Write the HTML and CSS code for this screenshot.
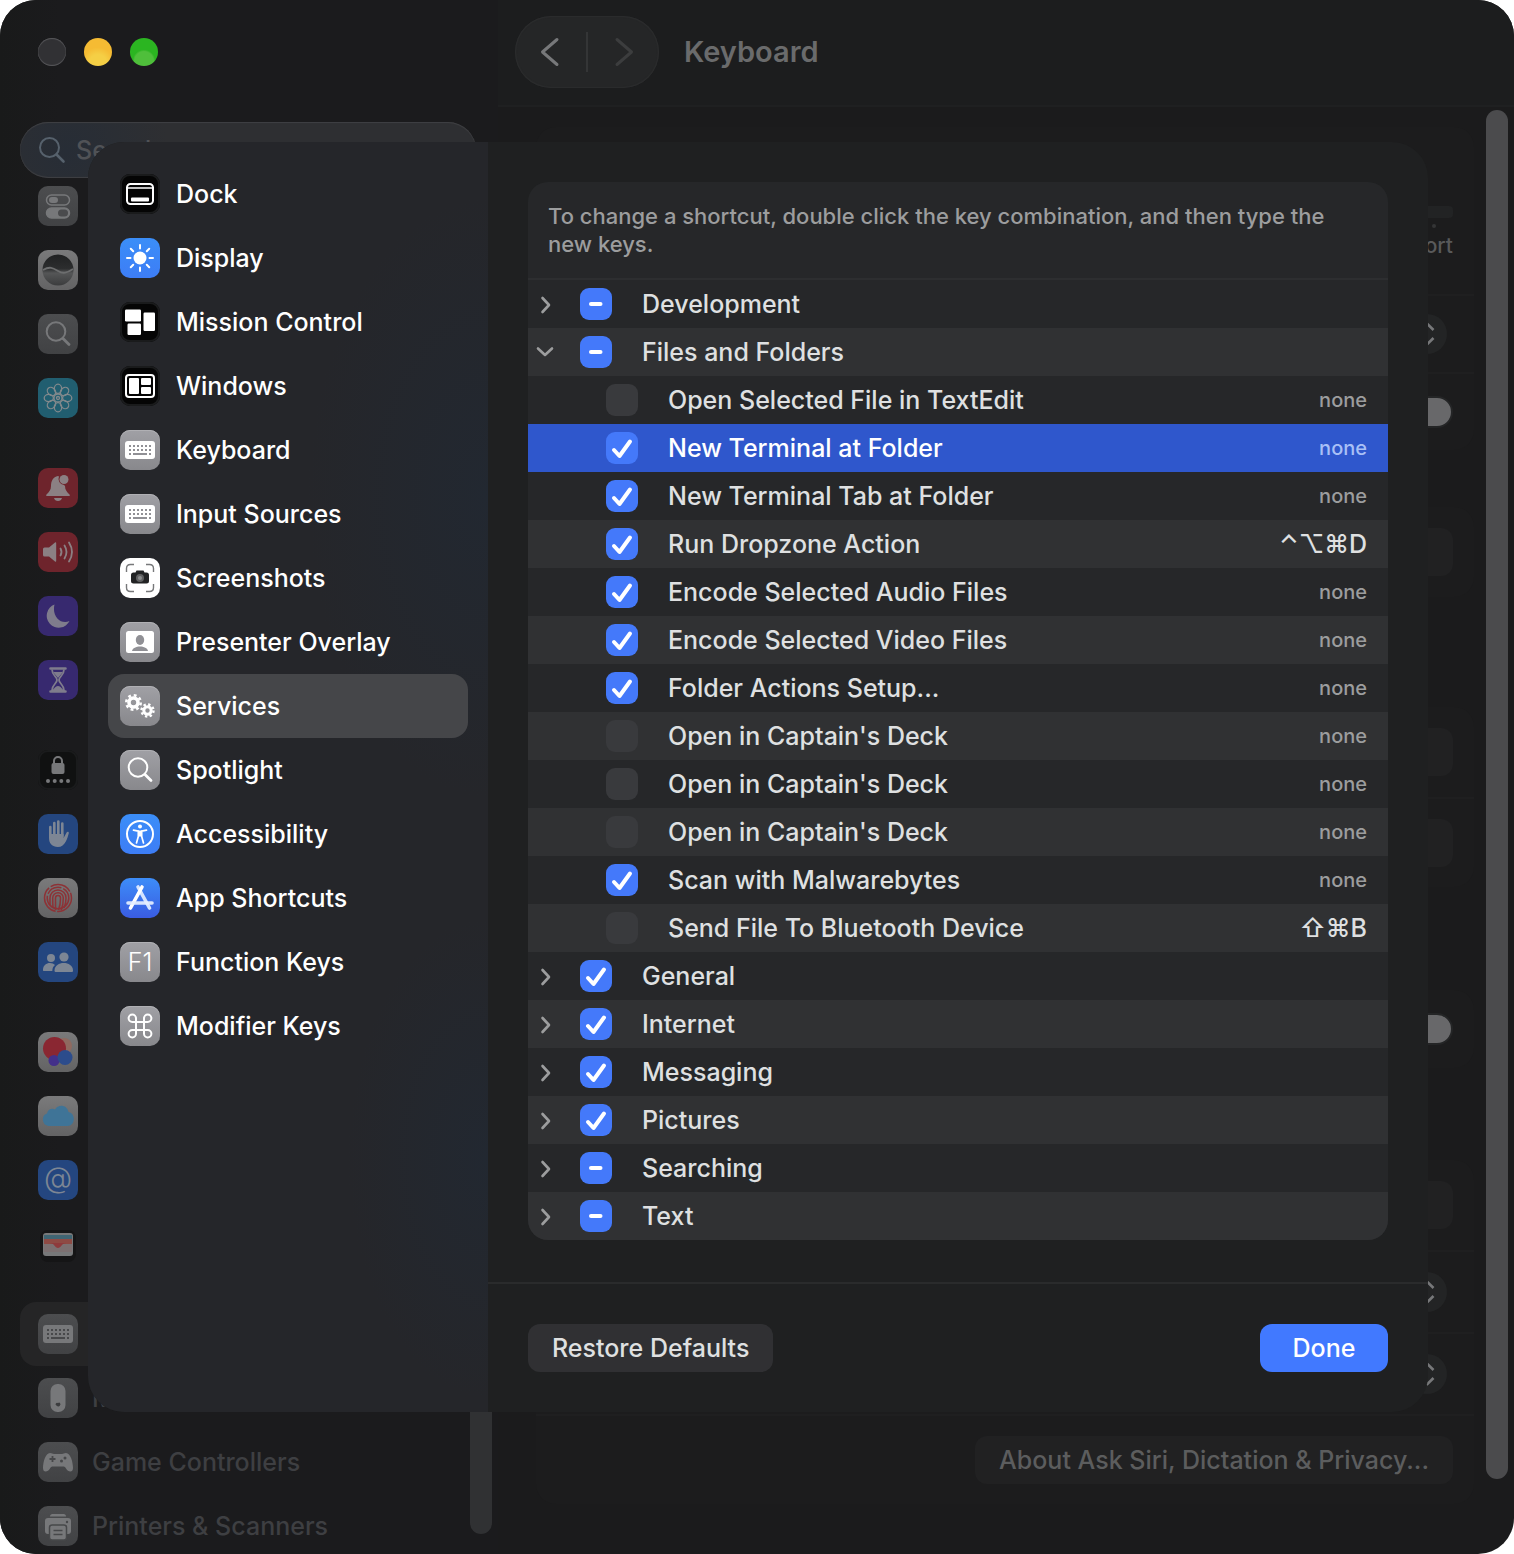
FILE: index.html
```html
<!DOCTYPE html>
<html lang="en">
<head>
<meta charset="utf-8">
<meta name="viewport" content="width=device-width, initial-scale=1">
<title>Keyboard</title>
<link rel="stylesheet" href="styles.css">
</head>
<body>
<svg class="defs" aria-hidden="true">
  <defs>
    <symbol id="i-search" viewBox="0 0 40 40"><g fill="none" stroke="currentColor" stroke-linecap="round"><circle cx="18" cy="17.500" r="9.300" stroke-width="2"/><path d="M25 24.500l6 6" stroke-width="2.800"/></g></symbol>
    <symbol id="i-keyboard" viewBox="0 0 40 40"><rect x="5" y="11" width="30" height="18" rx="3" fill="currentColor"/><g stroke="var(--tile)" stroke-width="2" fill="none"><path d="M9 16h22M9 20h22" stroke-dasharray="2 2"/><path d="M9 24h2M13 24h14M29 24h2"/></g></symbol>
    <symbol id="i-chevron" viewBox="0 0 16 20"><path d="M4.500 4l6.500 7-6.500 7" fill="none" stroke="currentColor" stroke-width="2.600" stroke-linecap="round" stroke-linejoin="round"/></symbol>
    <symbol id="i-updown" viewBox="0 0 40 40"><path d="M14.500 16l6-6 6 6M14.500 24l6 6 6-6" fill="none" stroke="currentColor" stroke-width="2.600"/></symbol>
  </defs>
</svg>

<div class="window">
  <aside class="sidebar">
    <div class="lights">
      <button class="light" type="button" aria-label="Close"></button>
      <button class="light light--yellow" type="button" aria-label="Minimize"></button>
      <button class="light light--green" type="button" aria-label="Zoom"></button>
    </div>
    <label class="search">
      <svg class="search__icon" viewBox="0 0 28 28"><g fill="none" stroke="currentColor" stroke-width="2" stroke-linecap="round"><circle cx="11.500" cy="11.500" r="9.500"/><path d="M18.500 18.500l7 7" stroke-width="2.600"/></g></svg>
      <input class="search__input" type="text" placeholder="Search">
    </label>

    <div class="nav">
      <div class="nav__group">
        <a class="nav__row" href="#"><span class="tile tile--dim"><svg viewBox="0 0 40 40"><g stroke="currentColor" stroke-width="1.500"><rect x="8.500" y="9" width="23" height="10" rx="5" fill="none"/><rect x="8.500" y="22" width="23" height="10" rx="5" fill="currentColor"/></g><rect x="11" y="11" width="9" height="6" rx="3" fill="currentColor"/><rect x="20" y="23.500" width="10" height="7" rx="3.500" fill="#4a4b4d"/></svg></span></a>
        <a class="nav__row" href="#"><span class="tile tile--pale"><svg viewBox="0 0 40 40"><defs><linearGradient id="orb" x1="0" y1="0" x2="0" y2="1"><stop offset="0" stop-color="#202122"/><stop offset=".45" stop-color="#2c2d2e"/><stop offset=".6" stop-color="#555657"/><stop offset="1" stop-color="#3b3c3d"/></linearGradient></defs><circle cx="20" cy="20" r="15.500" fill="url(#orb)"/><path d="M5 20c7-4 10-2 15 1s9 2 15-2" fill="none" stroke="#6d6e6f" stroke-width="1.800"/></svg></span></a>
        <a class="nav__row" href="#"><span class="tile tile--dim"><svg><use href="#i-search"/></svg></span></a>
        <a class="nav__row" href="#"><span class="tile tile--teal"><svg viewBox="0 0 40 40"><g fill="none" stroke="currentColor" stroke-width="1.300"><ellipse cx="20" cy="10.800" rx="3.700" ry="4.600"/><ellipse cx="20" cy="10.800" rx="3.700" ry="4.600" transform="rotate(45 20 20)"/><ellipse cx="20" cy="10.800" rx="3.700" ry="4.600" transform="rotate(90 20 20)"/><ellipse cx="20" cy="10.800" rx="3.700" ry="4.600" transform="rotate(135 20 20)"/><ellipse cx="20" cy="10.800" rx="3.700" ry="4.600" transform="rotate(180 20 20)"/><ellipse cx="20" cy="10.800" rx="3.700" ry="4.600" transform="rotate(225 20 20)"/><ellipse cx="20" cy="10.800" rx="3.700" ry="4.600" transform="rotate(270 20 20)"/><ellipse cx="20" cy="10.800" rx="3.700" ry="4.600" transform="rotate(315 20 20)"/><circle cx="20" cy="20" r="4"/><circle cx="20" cy="20" r="1.500"/></g></svg></span></a>
      </div>
      <div class="nav__group">
        <a class="nav__row" href="#"><span class="tile tile--red"><svg viewBox="0 0 40 40"><path d="M20 8c-5 1-7 5-7 10 0 4-2 6-4.500 8.500-.6.800-.3 1.500.5 1.500h22c.8 0 1.100-.7.500-1.500C29 24 27 22 27 18l-1-1a6 6 0 0 1-5-8.500zM16 30h8c-.5 2-2 3-4 3s-3.500-1-4-3z" fill="currentColor"/><circle cx="26" cy="11.500" r="4.500" fill="currentColor"/></svg></span></a>
        <a class="nav__row" href="#"><span class="tile tile--red"><svg viewBox="0 0 40 40"><path d="M5 17q0-1.500 1.500-1.500H11L17 10.500q1.200-.8 1.200.8v17.400q0 1.600-1.200.8L11 24.500H6.500Q5 24.500 5 23z" fill="currentColor"/><g fill="none" stroke="currentColor" stroke-width="1.800" stroke-linecap="round"><path d="M22.500 16.500q2 3.500 0 7M26.500 13.500q4 6.500 0 13M31 10.500q6 9.500 0 19"/></g></svg></span></a>
        <a class="nav__row" href="#"><span class="tile tile--violet"><svg viewBox="0 0 40 40"><path d="M16.500 8.500a12 12 0 1 0 15 16.500c-8 4-18-4-15-16.500z" fill="currentColor"/></svg></span></a>
        <a class="nav__row" href="#"><span class="tile tile--violet"><svg viewBox="0 0 40 40"><path d="M12.500 8.500h15M12.500 31.500h15" stroke="currentColor" stroke-width="2.600" stroke-linecap="round"/><path d="M14 9.500c0 6 5 7 5 10.500s-5 4.500-5 10.500h12c0-6-5-7-5-10.500s5-4.500 5-10.500" fill="none" stroke="currentColor" stroke-width="1.800"/><path d="M15 12h10l-5 6zM15 30q5-8 10 0z" fill="currentColor"/></svg></span></a>
      </div>
      <div class="nav__group">
        <a class="nav__row" href="#"><span class="tile tile--black tile--faded"><svg viewBox="0 0 40 40"><rect x="13.500" y="13" width="13" height="11" rx="2" fill="currentColor"/><path d="M16 14v-3a4 4 0 0 1 8 0v3" fill="none" stroke="currentColor" stroke-width="2"/><g fill="currentColor"><circle cx="10" cy="31" r="2"/><circle cx="16.700" cy="31" r="2"/><circle cx="23.300" cy="31" r="2"/><circle cx="30" cy="31" r="2"/></g></svg></span></a>
        <a class="nav__row" href="#"><span class="tile tile--navy"><svg viewBox="0 0 40 40"><g stroke="currentColor" stroke-width="2.600" stroke-linecap="round" fill="none"><path d="M12.300 13v10M16.300 9v13M20.300 7.500V22M24.300 9.500V22"/></g><path d="M11 20h14.600v4l3-5.500c.8-1.500 2.600-.8 2.200.7-1.300 4.300-3.300 13.800-11 13.800-5.500 0-8.800-3.500-8.800-9z" fill="currentColor"/></svg></span></a>
        <a class="nav__row" href="#"><span class="tile tile--pale"><svg viewBox="0 0 40 40"><g fill="none" stroke="#8d3236" stroke-width="1.500"><circle cx="20" cy="20" r="13.500" stroke-dasharray="22 1.500 30 2"/><circle cx="20" cy="20" r="10.800" stroke-dasharray="36 2 16 2"/><path d="M12 27V20a8 8 0 0 1 16 0q0 6-2 10M15 30q-.3-5-.3-10a5.300 5.300 0 0 1 10.600 0q0 7-2 12M17.500 32V20a2.500 2.500 0 0 1 5 0q0 7-2 12"/></g></svg></span></a>
        <a class="nav__row" href="#"><span class="tile tile--navy"><svg viewBox="0 0 40 40"><g fill="currentColor"><circle cx="13" cy="16" r="4"/><path d="M5 28c0-8 9-8.500 12-5-2 1.500-2.500 3-2.700 6H6.500C5.300 29 5 29 5 28z"/><circle cx="26" cy="15" r="4.600"/><path d="M16.500 28.500c0-10 18.500-10 18.500 0 0 1-.5 1.500-1.500 1.500H18c-1 0-1.500-.5-1.500-1.500z"/></g></svg></span></a>
      </div>
      <div class="nav__group">
        <a class="nav__row" href="#"><span class="tile tile--pale"><svg viewBox="0 0 40 40"><circle cx="26" cy="14" r="8" fill="#8f6a60"/><circle cx="16.500" cy="16.500" r="11.500" fill="#8a2732"/><circle cx="16" cy="28.500" r="5.500" fill="#43308a"/><circle cx="27" cy="25.500" r="7.500" fill="#2c4c8c"/></svg></span></a>
        <a class="nav__row" href="#"><span class="tile tile--pale"><svg viewBox="0 0 40 40"><path d="M10.500 30a6.500 6.500 0 0 1-1.500-12.500c.5-4 5-6 8-4 3-5.500 12-5 13.500 2.500 7.500 1.500 7 14-1 14z" fill="#3f7497"/></svg></span></a>
        <a class="nav__row" href="#"><span class="tile tile--navy tile--glyph tile--at">@</span></a>
        <a class="nav__row" href="#"><span class="tile tile--none"><svg viewBox="0 0 40 40"><rect x="2" y="6" width="36" height="32" rx="8" fill="#151516"/><rect x="5" y="9" width="30" height="23" rx="3" fill="#777879"/><path d="M6 11h28v4H6z" fill="#3f6472"/><path d="M6 15h28v5H6z" fill="#8e4a44"/><path d="M6 20h8c2 0 3 4 6 4s4-4 6-4h8v8H6z" fill="#7c7071"/><path d="M12 19c4 0 5 5 8 5s4-5 8-5z" fill="#8e3a3c"/></svg></span></a>
      </div>
      <div class="nav__group">
        <a class="nav__row nav__row--current" href="#"><span class="tile tile--dim"><svg><use href="#i-keyboard"/></svg></span></a>
        <a class="nav__row" href="#"><span class="tile tile--dim"><svg viewBox="0 0 40 40"><rect x="12.500" y="6" width="15" height="28" rx="7" fill="currentColor"/><path d="M20 25q2-1.500 2.500 1.500Q21.500 29 20 28.500T17.500 26.500Q18 24 20 25z" fill="#3c3d3f"/></svg></span>Mouse</a>
        <a class="nav__row" href="#"><span class="tile tile--dim"><svg viewBox="0 0 40 40"><path d="M12 11c2 0 2.500 1 4 1h8c1.500 0 2-1 4-1 4.500 0 7 9 7 15 0 5-5 4-7 .5-.8-1.500-1.500-2-3-2H15c-1.500 0-2.200.5-3 2-2 3.500-7 4.500-7-.5 0-6 2.500-15 7-15z" fill="currentColor"/><path d="M14.500 14v6M11.500 17h6" stroke="#47484a" stroke-width="1.800"/><circle cx="27" cy="16" r="1.500" fill="#47484a"/><circle cx="23.500" cy="19" r="1.500" fill="#47484a"/></svg></span>Game Controllers</a>
        <a class="nav__row" href="#"><span class="tile tile--dim"><svg viewBox="0 0 40 40"><path d="M12 10.500q0-2.500 2.500-2.500h11q2.500 0 2.500 2.500z" fill="currentColor"/><rect x="7" y="12" width="26" height="16" rx="3" fill="currentColor"/><rect x="11.500" y="19" width="17" height="15" rx="2.500" fill="currentColor" stroke="#47484a" stroke-width="1.500"/><path d="M15.500 24.500h9M15.500 28.500h9" stroke="#47484a" stroke-width="1.600"/><circle cx="29" cy="16" r="1.200" fill="#47484a"/></svg></span>Printers &amp; Scanners</a>
      </div>
    </div>
    <div class="thumb thumb--sidebar"></div>
  </aside>

  <main class="pane">
    <header class="toolbar">
      <div class="history">
        <button class="history__button" type="button" aria-label="Back"><svg viewBox="0 0 40 40"><path d="M26 7.500L11.500 20 26 32.500" fill="none" stroke="currentColor" stroke-width="3" stroke-linecap="round" stroke-linejoin="round"/></svg></button>
        <button class="history__button history__button--off" type="button" aria-label="Forward"><svg viewBox="0 0 40 40"><path d="M13 7.500L27.500 20 13 32.500" fill="none" stroke="currentColor" stroke-width="3" stroke-linecap="round" stroke-linejoin="round"/></svg></button>
      </div>
      <h1 class="toolbar__title">Keyboard</h1>
    </header>
    <div class="settings">
      <section class="group">
        <div class="setting setting--slider"><div class="slider"><span class="slider__track"></span><span class="slider__tick"></span><span class="slider__label">Short</span></div></div>
        <div class="setting"><span class="popup"><svg><use href="#i-updown"/></svg></span></div>
        <div class="setting"><span class="toggle"></span></div>
      </section>
      <section class="group group--b"><div class="setting setting--button"><span class="ghost"></span></div></section>
      <section class="group group--c">
        <div class="setting setting--button"><span class="ghost"></span></div>
        <div class="setting setting--button"><span class="ghost"></span></div>
      </section>
      <section class="group group--d"><div class="setting"><span class="toggle"></span></div></section>
      <section class="group group--e">
        <div class="setting setting--button"><span class="ghost"></span></div>
        <div class="setting setting--popup"><span class="popup"><svg><use href="#i-updown"/></svg></span></div>
        <div class="setting setting--popup"><span class="popup"><svg><use href="#i-updown"/></svg></span></div>
        <div class="setting setting--button"><button class="ghost ghost--text" type="button">About Ask Siri, Dictation &amp; Privacy...</button></div>
      </section>
    </div>
    <div class="thumb thumb--pane"></div>
  </main>

  <div class="sheet" role="dialog" aria-modal="true">
    <nav class="sections">
      <a class="section" href="#"><span class="tile tile--black"><svg viewBox="0 0 40 40"><rect x="7" y="10" width="26" height="20" rx="3.500" fill="none" stroke="currentColor" stroke-width="2"/><path d="M7 14h26" stroke="currentColor" stroke-width="1.600"/><rect x="11" y="23.500" width="18" height="4" rx="1" fill="currentColor"/></svg></span>Dock</a>
      <a class="section" href="#"><span class="tile tile--blue"><svg viewBox="0 0 40 40"><circle cx="20" cy="20" r="6.500" fill="currentColor"/><path d="M20 7v3.500M20 29.500V33M7 20h3.500M29.500 20H33M10.800 10.800l2.400 2.400M26.800 26.800l2.400 2.400M10.800 29.200l2.400-2.400M26.800 13.200l2.400-2.400" stroke="currentColor" stroke-width="2" stroke-linecap="round"/></svg></span>Display</a>
      <a class="section" href="#"><span class="tile tile--black"><svg viewBox="0 0 40 40"><g fill="currentColor"><rect x="5" y="7.500" width="16" height="12" rx="1.200"/><rect x="7.500" y="21.500" width="13.500" height="11.500" rx="1.200"/><rect x="23.500" y="10.500" width="11.500" height="18.500" rx="1.200"/></g></svg></span>Mission Control</a>
      <a class="section" href="#"><span class="tile tile--black"><svg viewBox="0 0 40 40"><rect x="6" y="9" width="28" height="22" rx="3" fill="none" stroke="currentColor" stroke-width="2"/><g fill="currentColor"><rect x="9" y="12" width="10" height="16" rx="1"/><rect x="21" y="12" width="10" height="7" rx="1"/><rect x="21" y="21" width="10" height="7" rx="1"/></g></svg></span>Windows</a>
      <a class="section" href="#"><span class="tile tile--gray"><svg><use href="#i-keyboard"/></svg></span>Keyboard</a>
      <a class="section" href="#"><span class="tile tile--gray"><svg><use href="#i-keyboard"/></svg></span>Input Sources</a>
      <a class="section" href="#"><span class="tile tile--white"><svg viewBox="0 0 40 40"><path d="M6.500 14v-3.500q0-4 4-4H14M26 6.500h3.500q4 0 4 4V14M33.500 26v3.500q0 4-4 4H26M14 33.500h-3.500q-4 0-4-4V26" fill="none" stroke="#77787a" stroke-width="1.400"/><path d="M11 17q0-2.500 2.500-2.500h2l1-2h7l1 2h2q2.500 0 2.500 2.500v6q0 2.500-2.500 2.500h-13Q11 25.500 11 23z" fill="#222324"/><circle cx="20" cy="20" r="4" fill="#606162"/><circle cx="20" cy="20" r="2" fill="#8b8c8d"/></svg></span>Screenshots</a>
      <a class="section" href="#"><span class="tile tile--gray"><svg viewBox="0 0 40 40"><rect x="6" y="9" width="28" height="22" rx="2.500" fill="currentColor"/><g fill="var(--tile)"><ellipse cx="20" cy="18" rx="4.200" ry="5"/><path d="M12 29c1-6 15-6 16 0z"/></g></svg></span>Presenter Overlay</a>
      <a class="section section--current" href="#" aria-current="page"><span class="tile tile--gray"><svg viewBox="0 0 40 40"><g fill="none" stroke="currentColor"><circle cx="13.500" cy="16.500" r="4.500" stroke-width="3.600"/><circle cx="13.500" cy="16.500" r="7.200" stroke-width="2.600" stroke-dasharray="2.830 2.830"/><circle cx="27.500" cy="24.500" r="3.700" stroke-width="3"/><circle cx="27.500" cy="24.500" r="6" stroke-width="2.400" stroke-dasharray="2.350 2.350"/></g></svg></span>Services</a>
      <a class="section" href="#"><span class="tile tile--gray"><svg><use href="#i-search"/></svg></span>Spotlight</a>
      <a class="section" href="#"><span class="tile tile--blue"><svg viewBox="0 0 40 40"><circle cx="20" cy="20" r="13" fill="none" stroke="currentColor" stroke-width="2"/><circle cx="20" cy="12.600" r="2" fill="currentColor"/><path d="M13.500 16.200l4.800 1v5.300l-1.800 6.500M26.500 16.200l-4.800 1v5.300l1.800 6.500" fill="none" stroke="currentColor" stroke-width="1.700" stroke-linecap="round" stroke-linejoin="round"/><path d="M18 16.400h4v6.200h-4z" fill="currentColor"/></svg></span>Accessibility</a>
      <a class="section" href="#"><span class="tile tile--store"><svg viewBox="0 0 40 40"><g stroke-linecap="round" stroke-width="3.600" fill="none"><path d="M18 9l11.500 21" stroke="#d5e4ff"/><path d="M22 9L10.500 30" stroke="#fff"/><path d="M8 25h24" stroke="#e6efff" stroke-opacity=".92"/></g></svg></span>App Shortcuts</a>
      <a class="section" href="#"><span class="tile tile--gray tile--glyph">F1</span>Function Keys</a>
      <a class="section" href="#"><span class="tile tile--gray"><svg viewBox="0 0 40 40"><path d="M16 16h8v8h-8zM16 16v-3.700A3.700 3.700 0 1 0 12.300 16zM24 16h3.700A3.700 3.700 0 1 0 24 12.300zM24 24v3.700A3.700 3.700 0 1 0 27.700 24zM16 24h-3.700A3.700 3.700 0 1 0 16 27.700z" fill="none" stroke="currentColor" stroke-width="2"/></svg></span>Modifier Keys</a>
    </nav>

    <div class="content">
      <div class="content__body">
        <div class="card">
          <p class="card__note">To change a shortcut, double click the key combination, and then type the new keys.</p>
          <ul class="rows">
            <li class="row"><button class="row__toggle" type="button" aria-label="Expand"><svg><use href="#i-chevron"/></svg></button><label class="row__label"><input class="check check--mixed" type="checkbox">Development</label></li>
            <li class="row"><button class="row__toggle row__toggle--open" type="button" aria-label="Collapse"><svg><use href="#i-chevron"/></svg></button><label class="row__label"><input class="check check--mixed" type="checkbox">Files and Folders</label></li>
            <li class="row row--child"><label class="row__label"><input class="check" type="checkbox">Open Selected File in TextEdit</label><span class="row__key">none</span></li>
            <li class="row row--child row--selected"><label class="row__label"><input class="check" type="checkbox" checked>New Terminal at Folder</label><span class="row__key">none</span></li>
            <li class="row row--child"><label class="row__label"><input class="check" type="checkbox" checked>New Terminal Tab at Folder</label><span class="row__key">none</span></li>
            <li class="row row--child"><label class="row__label"><input class="check" type="checkbox" checked>Run Dropzone Action</label><kbd class="row__key row__key--set">⌃⌥⌘D</kbd></li>
            <li class="row row--child"><label class="row__label"><input class="check" type="checkbox" checked>Encode Selected Audio Files</label><span class="row__key">none</span></li>
            <li class="row row--child"><label class="row__label"><input class="check" type="checkbox" checked>Encode Selected Video Files</label><span class="row__key">none</span></li>
            <li class="row row--child"><label class="row__label"><input class="check" type="checkbox" checked>Folder Actions Setup...</label><span class="row__key">none</span></li>
            <li class="row row--child"><label class="row__label"><input class="check" type="checkbox">Open in Captain's Deck</label><span class="row__key">none</span></li>
            <li class="row row--child"><label class="row__label"><input class="check" type="checkbox">Open in Captain's Deck</label><span class="row__key">none</span></li>
            <li class="row row--child"><label class="row__label"><input class="check" type="checkbox">Open in Captain's Deck</label><span class="row__key">none</span></li>
            <li class="row row--child"><label class="row__label"><input class="check" type="checkbox" checked>Scan with Malwarebytes</label><span class="row__key">none</span></li>
            <li class="row row--child"><label class="row__label"><input class="check" type="checkbox">Send File To Bluetooth Device</label><kbd class="row__key row__key--set">⇧⌘B</kbd></li>
            <li class="row"><button class="row__toggle" type="button" aria-label="Expand"><svg><use href="#i-chevron"/></svg></button><label class="row__label"><input class="check" type="checkbox" checked>General</label></li>
            <li class="row"><button class="row__toggle" type="button" aria-label="Expand"><svg><use href="#i-chevron"/></svg></button><label class="row__label"><input class="check" type="checkbox" checked>Internet</label></li>
            <li class="row"><button class="row__toggle" type="button" aria-label="Expand"><svg><use href="#i-chevron"/></svg></button><label class="row__label"><input class="check" type="checkbox" checked>Messaging</label></li>
            <li class="row"><button class="row__toggle" type="button" aria-label="Expand"><svg><use href="#i-chevron"/></svg></button><label class="row__label"><input class="check" type="checkbox" checked>Pictures</label></li>
            <li class="row"><button class="row__toggle" type="button" aria-label="Expand"><svg><use href="#i-chevron"/></svg></button><label class="row__label"><input class="check check--mixed" type="checkbox">Searching</label></li>
            <li class="row"><button class="row__toggle" type="button" aria-label="Expand"><svg><use href="#i-chevron"/></svg></button><label class="row__label"><input class="check check--mixed" type="checkbox">Text</label></li>
          </ul>
        </div>
      </div>
      <footer class="content__footer">
        <button class="button" type="button">Restore Defaults</button>
        <button class="button button--primary" type="button">Done</button>
      </footer>
    </div>
  </div>
</div>
</body>
</html>
```
FILE: styles.css
```css
*, *::before, *::after { box-sizing: border-box; }

body {
  margin: 0;
  background: #fff;
  color: #dfe0e1;
  font: 500 25px/32px Inter, "Liberation Sans", sans-serif;
}

a { color: inherit; text-decoration: none; }
button, input { font: inherit; color: inherit; }
button { border: 0; padding: 0; background: none; }
ul { list-style: none; margin: 0; padding: 0; }
svg { display: block; width: 100%; height: 100%; }
.defs { position: absolute; width: 0; height: 0; }

.window {
  position: relative;
  display: grid;
  grid-template-columns: 498px minmax(0, 1fr);
  height: 100vh;
  overflow: hidden;
  border-radius: 36px;
  background: #1b1b1c;
}

/* Sidebar of the settings window */
.sidebar {
  position: relative;
  display: flex;
  flex-direction: column;
  min-height: 0;
  padding: 38px 22px 0 20px;
  overflow: hidden;
  background: linear-gradient(to right, #191a1a, #1b1b1d 60px);
}

.lights { display: flex; gap: 18px; padding-left: 18px; }
.light {
  width: 28px;
  height: 28px;
  border-radius: 50%;
  background: #313134;
  box-shadow: inset 0 1px 1px #5a5a5d, inset 0 -1px 1px #5a5a5d;
}
.light--yellow { background: radial-gradient(circle at 50% 90%, #f5cf45 30%, #f5bb33 55%); box-shadow: none; }
.light--green { background: radial-gradient(circle at 50% 82%, #4fbf3b 35%, #2bb521 42%); box-shadow: none; }

.search {
  display: flex;
  flex: none;
  align-items: center;
  gap: 10px;
  height: 56px;
  margin-top: 56px;
  padding: 0 18px;
  border-radius: 28px;
  background: radial-gradient(circle at 48px 50%, #272d36, #2e2f32 100px);
  box-shadow: inset 0 1px 1px #404144, inset 0 -1px 1px #404144;
}
.search__icon { flex: none; width: 28px; height: 28px; color: #56616c; }
.search__input { flex: 1; min-width: 0; border: 0; padding: 0; background: none; outline: 0; }
.search__input::placeholder { color: #505256; opacity: 1; }

.nav { display: flex; flex-direction: column; gap: 26px; margin-top: -4px; }
.nav__row {
  display: flex;
  align-items: center;
  gap: 14px;
  height: 64px;
  padding: 0 18px;
  border-radius: 16px;
  color: #3e3f42;
}
.nav__row--current { background: #252526; }

/* App icon tiles */
.tile {
  --tile: #909095;
  flex: none;
  width: 40px;
  height: 40px;
  border-radius: 10px;
  overflow: hidden;
  background: var(--tile);
  color: #fff;
}
.tile--gray { background: linear-gradient(#a0a0a5, #88888c); box-shadow: inset 0 1px #b0b0b4; }
.tile--black { background: #050505; box-shadow: inset 0 0 0 2px #1a1b1c; }
.tile--blue { background: linear-gradient(#3b8ef8, #3d7df6); }
.tile--store { background: linear-gradient(#3d8df8, #3a5ce2); }
.tile--white { background: #fff; }
.tile--dim { --tile: #47484a; background: linear-gradient(#4c4d4f, #414244); color: #77787a; }
.tile--faded { background: #101111; color: #77787a; }
.tile--pale { background: linear-gradient(#7a7a7b, #636364); }
.tile--teal { background: #215e70; color: #82898c; }
.tile--red { background: #6e242c; color: #8b8083; }
.tile--violet { background: #37296f; color: #7f7c8c; }
.tile--navy { background: #24467f; color: #7d8694; }
.tile--none { background: none; }
.tile--glyph { font-size: 25px; font-weight: 300; line-height: 40px; text-align: center; }
.tile--at { font-size: 29px; line-height: 36px; }

/* Scroll indicators */
.thumb { position: absolute; width: 22px; border-radius: 11px; }
.thumb--sidebar { top: 1180px; right: 6px; bottom: 20px; background: #303133; }
.thumb--pane { top: 110px; right: 6px; bottom: 75px; background: #4b4b4d; }

/* Settings pane behind the sheet */
.pane { position: relative; min-width: 0; }
.toolbar {
  display: flex;
  align-items: center;
  gap: 25px;
  height: 107px;
  padding: 0 17px 2px;
  border-bottom: 2px solid #1f2021;
  background: #1c1d1e;
}
.history {
  display: flex;
  align-items: center;
  width: 144px;
  height: 72px;
  border-radius: 36px;
  background: #252627;
  box-shadow: inset 0 0 1px 1px #2c2d2e;
}
.history__button { display: flex; flex: 1; justify-content: center; color: #77787a; }
.history__button svg { width: 40px; height: 40px; }
.history__button--off { border-left: 2px solid #343536; color: #3c3d3e; }
.toolbar__title { margin: 0; color: #6a6b6c; font-size: 29px; font-weight: 600; }

.settings { padding: 20px 40px 0 38px; }
.group { border-radius: 20px; background: #1c1c1d; }
.group--b { margin-top: 57px; }
.group--c { margin-top: 110px; }
.group--d { margin-top: 103px; }
.group--e { margin-top: 92px; }
.setting {
  display: flex;
  align-items: center;
  justify-content: flex-end;
  height: 78px;
  padding: 0 21px;
}
.setting + .setting { border-top: 2px solid #1f1f20; }
.setting--slider { align-items: flex-start; height: 167px; padding-top: 79px; }
.setting--button { height: 90px; }
.setting--popup { height: 82px; }
.slider { display: flex; flex-direction: column; align-items: flex-end; color: #58595a; font-size: 21px; line-height: 28px; }
.slider__track { width: 200px; height: 12px; border-radius: 4px; background: #222324; }
.slider__tick { width: 4px; height: 4px; margin: 6px 17px 4px 0; border-radius: 2px; background: #343536; }
.popup { width: 40px; height: 40px; margin-right: 6px; border-radius: 50%; background: #232425; color: #77787a; }
.toggle { width: 64px; height: 32px; border: 2px solid #242526; border-radius: 16px; background: #68686a; }
.ghost { width: 120px; height: 48px; border-radius: 12px; background: #212122; }
.ghost--text { width: auto; padding: 0 24px; color: #5c5d5e; }

/* Shortcuts sheet */
.sheet {
  position: absolute;
  top: 142px;
  left: 88px;
  right: 86px;
  display: grid;
  grid-template-columns: 400px minmax(0, 1fr);
  overflow: hidden;
  border-radius: 36px;
  background: #1f2021;
}
.sections {
  padding: 20px;
  background:
    radial-gradient(ellipse 180px 300px at 100% 28%, #222831, transparent),
    radial-gradient(ellipse 140px 240px at 100% 80%, #222831, transparent),
    #25262a;
}
.section {
  display: flex;
  align-items: center;
  gap: 16px;
  height: 64px;
  padding: 0 12px;
  border-radius: 16px;
  color: #fff;
}
.section--current { background: #454649; }

.content { display: flex; flex-direction: column; min-width: 0; }
.content__body { padding: 40px 40px 42px; }
.card { overflow: hidden; border-radius: 20px; background: #262729; }
.card__note {
  margin: 0;
  padding: 20px;
  border-bottom: 2px solid #2d2e30;
  color: #9c9d9e;
  font-size: 22px;
  line-height: 28px;
}
.row { display: flex; align-items: center; height: 48px; padding-right: 21px; }
.row:nth-child(even) { background: #303133; }
.row--child { padding-left: 78px; }
.row.row--selected { background: #2f57cc; color: #fff; }
.row__toggle { width: 36px; height: 20px; margin-right: 16px; color: #9c9d9e; }
.row__toggle svg { width: 16px; height: 20px; margin: 0 auto; }
.row__toggle--open svg { transform: rotate(90deg); }
.row__label { display: flex; flex: 1; align-items: center; gap: 30px; }
.row__key { color: #9c9d9e; font-family: inherit; font-size: 20px; }
.row--selected .row__key { color: #a9c0f6; }
.row__key--set { color: #dfe0e1; font-size: 25px; }

.check {
  appearance: none;
  flex: none;
  width: 32px;
  height: 32px;
  margin: 0;
  border-radius: 9px;
  background: #393a3d center / 32px 32px no-repeat;
}
.check:checked {
  background-color: #4479fa;
  background-image: url("data:image/svg+xml,%3Csvg xmlns='http://www.w3.org/2000/svg' viewBox='0 0 32 32'%3E%3Cpath d='M8 18l5.500 6L24 9.500' fill='none' stroke='white' stroke-width='4' stroke-linecap='round' stroke-linejoin='round'/%3E%3C/svg%3E");
}
.check--mixed {
  background-color: #4479fa;
  background-image: url("data:image/svg+xml,%3Csvg xmlns='http://www.w3.org/2000/svg' viewBox='0 0 32 32'%3E%3Cpath d='M11 16h9.500' fill='none' stroke='white' stroke-width='4' stroke-linecap='round'/%3E%3C/svg%3E");
}

.content__footer {
  display: flex;
  justify-content: space-between;
  padding: 40px;
  border-top: 2px solid #2a2b2c;
}
.button { height: 48px; padding: 0 24px; border-radius: 12px; background: #303033; }
.button--primary { min-width: 128px; background: #4179ff; color: #fff; }
```
